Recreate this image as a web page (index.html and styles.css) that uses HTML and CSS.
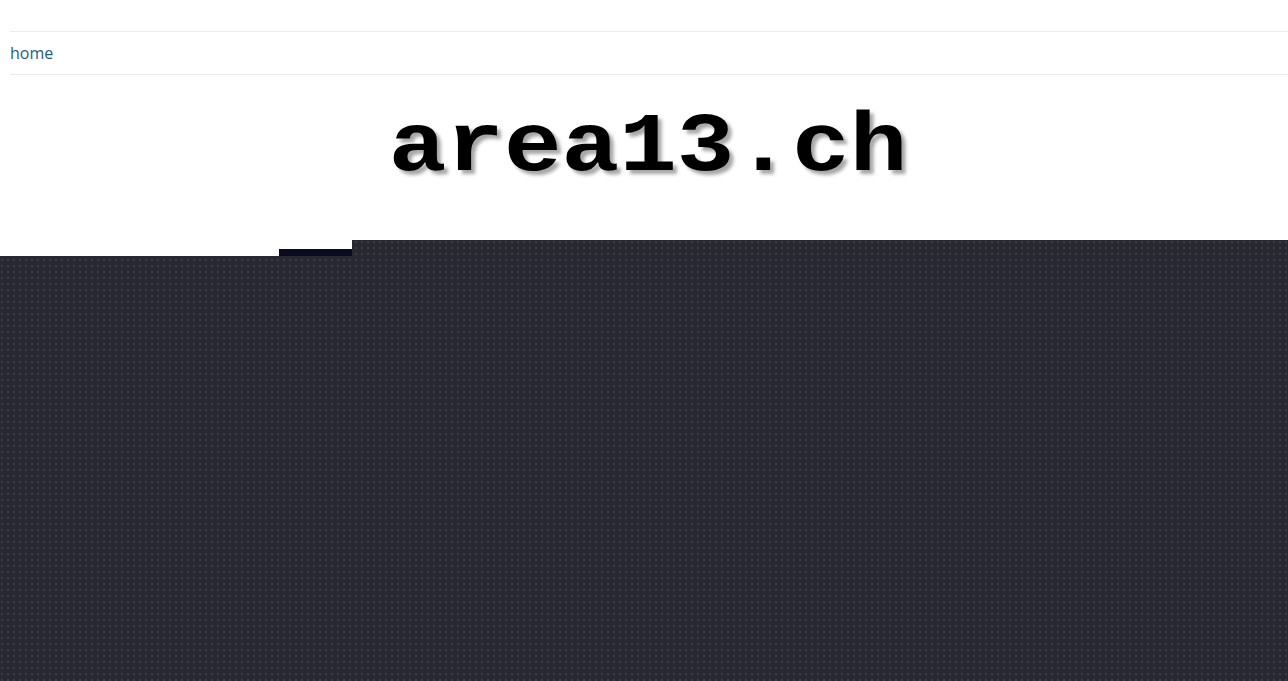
FILE: index.html
```html
<!DOCTYPE html>
<html>
<head>
<meta charset="utf-8">
<link rel="stylesheet" href="styles.css">
</head>
<body>
<div class="top">
  <nav class="nav"><a class="nav-link" href="#">home</a></nav>
  <h1 class="title"><span class="title-text">area13.ch</span></h1>
</div>
<div class="dark">
  <div class="notch"><div class="notch-bar"></div></div>
</div>
</body>
</html>
```

FILE: styles.css
```css
html, body {
  margin: 0;
  padding: 0;
  background: #ffffff;
  height: 100%;
  overflow: hidden;
}
body {
  display: flex;
  flex-direction: column;
}
.top {
  height: 240px;
  padding-top: 31px;
  box-sizing: border-box;
}
.nav {
  margin-left: 10px;
  border-top: 1px solid #ebebeb;
  border-bottom: 1px solid #ebebeb;
  height: 42px;
  display: flex;
  align-items: center;
}
.nav-link {
  font-family: "Open Sans", sans-serif;
  font-size: 16px;
  color: #255b84;
  text-decoration: none;
  margin-top: -1px;
}
.title {
  margin: 0;
  padding-top: 19px;
  text-align: center;
  font-family: "Liberation Mono", monospace;
  font-weight: bold;
  font-size: 96px;
  line-height: 100px;
  color: #000;
  padding-left: 8px;
}
.title-text {
  display: inline-block;
  transform: scaleY(0.86);
  transform-origin: 0 83px;
  text-shadow: 4px 5px 4px rgba(0,0,0,0.35);
}
.dark {
  flex: 1;
  background-color: #282831;
  background-image: radial-gradient(circle at 2px 2px, #3d3d4a 0.8px, transparent 1.3px);
  background-size: 6px 6px;
}
.notch {
  width: 352px;
  height: 16px;
  background: #ffffff;
  display: flex;
  justify-content: flex-end;
  align-items: flex-end;
}
.notch-bar {
  width: 73px;
  height: 7px;
  background: #0b0b1f;
}
```
